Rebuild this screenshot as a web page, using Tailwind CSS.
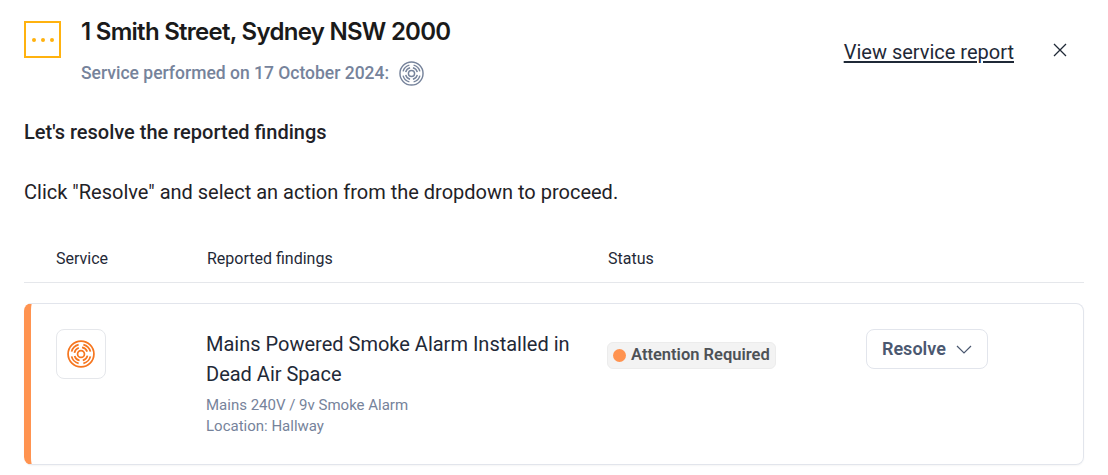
<!DOCTYPE html>
<html lang="en">

<head>
    <meta charset="UTF-8">
    <title>Service findings</title>
    <script src="https://cdn.jsdelivr.net/npm/@tailwindcss/browser@4"></script>
</head>

<body class="bg-white font-['Roboto',sans-serif] text-[#1f2227] overflow-hidden">
    <div class="w-[1108px] h-[475px] px-6 pt-[21px] overflow-hidden">
        <!-- header -->
        <div class="flex items-start">
            <div class="w-[37px] h-[37px] border-2 border-[#ffb20f] flex items-center justify-center gap-[5px]">
                <span class="w-[4px] h-[4px] rounded-full bg-[#ffb20f]"></span>
                <span class="w-[4px] h-[4px] rounded-full bg-[#ffb20f]"></span>
                <span class="w-[4px] h-[4px] rounded-full bg-[#ffb20f]"></span>
            </div>
            <div class="ml-5 flex-1">
                <h1 class="font-['Inter',sans-serif] font-semibold text-[24px] leading-[22px] tracking-[-0.72px] text-[#1a1a1a]">1 Smith Street, Sydney NSW 2000</h1>
                <div class="flex items-center mt-[17px] h-[26px]">
                    <p class="font-medium text-[17.5px] text-[#76839b]">Service performed on 17 October 2024:</p>
                    <svg class="ml-[10px]" width="25" height="25" viewBox="0 0 26 26" fill="none" stroke="#76839b" stroke-width="1.500">
                        <circle cx="13" cy="13" r="12"/>
                        <circle cx="13" cy="13" r="3.200"/>
                        <circle cx="13" cy="13" r="6.200" pathLength="100" stroke-dasharray="17 8" stroke-dashoffset="-4"/>
                        <circle cx="13" cy="13" r="9" pathLength="100" stroke-dasharray="17 8" stroke-dashoffset="-4"/>
                    </svg>
                </div>
            </div>
            <a href="#" class="mt-[18px] text-[20px] leading-[26px] underline underline-offset-2 text-[#1f2937]">View service report</a>
            <svg class="ml-[39px] mt-[22px] mr-[17px]" width="14" height="14" viewBox="0 0 14 14" fill="none" stroke="#1f2937" stroke-width="1.3">
                <path d="M1 1l12 12M13 1L1 13"/>
            </svg>
        </div>

        <p class="mt-[34px] font-medium text-[20px] leading-[24px] text-[#1f2227]">Let's resolve the reported findings</p>
        <p class="mt-[36px] text-[20px] leading-[24px] text-[#1f2227]">Click "Resolve" and select an action from the dropdown to proceed.</p>

        <!-- table head -->
        <div class="grid grid-cols-[183px_401px_258px_1fr] mt-[32px] h-[47px] items-center border-b border-[#e5e7eb] text-[16px] text-[#1f2937]">
            <span class="pl-8">Service</span>
            <span>Reported findings</span>
            <span>Status</span>
        </div>

        <!-- finding row -->
        <div class="grid grid-cols-[175px_402px_258px_1fr] mt-5 h-[162px] rounded-lg border border-[#e2e5ec] border-l-[7px] border-l-[#ff9350] shadow-[0_1px_2px_rgba(0,0,0,0.04)]">
            <div class="pl-[25px] pt-[25px]">
                <div class="w-[50px] h-[50px] rounded-lg border border-[#e5e7eb] flex items-center justify-center">
                    <svg width="28" height="28" viewBox="0 0 26 26" fill="none" stroke="#f6761f" stroke-width="1.600">
                        <circle cx="13" cy="13" r="12"/>
                        <circle cx="13" cy="13" r="3.200"/>
                        <circle cx="13" cy="13" r="6.200" pathLength="100" stroke-dasharray="17 8" stroke-dashoffset="-4"/>
                        <circle cx="13" cy="13" r="9" pathLength="100" stroke-dasharray="17 8" stroke-dashoffset="-4"/>
                    </svg>
                </div>
            </div>
            <div class="pt-[25px]">
                <p class="text-[20px] leading-[30px] text-[#1f2937]">Mains Powered Smoke Alarm Installed in Dead Air Space</p>
                <p class="mt-[6px] text-[15px] leading-[21px] text-[#76839b]">Mains 240V / 9v Smoke Alarm</p>
                <p class="text-[15px] leading-[21px] text-[#76839b]">Location: Hallway</p>
            </div>
            <div class="pt-[38px]">
                <span class="-ml-px inline-flex items-center h-[27px] px-[5px] rounded-md border border-[#ececec] bg-[#f3f3f3] font-semibold text-[16.5px] text-[#4d5156]">
                    <span class="w-[13px] h-[13px] rounded-full bg-[#ff9350] mr-[5px]"></span>Attention Required
                </span>
            </div>
            <div class="pt-[25px]">
                <button class="flex items-center h-[40px] w-[122px] pl-[15px] rounded-lg border border-[#e2e5ec] font-semibold text-[18px] text-[#4b5870]">
                    <span class="-mt-[2px]">Resolve</span>
                    <svg class="ml-[10px]" width="16" height="9" viewBox="0 0 16 9" fill="none" stroke="#4b5870" stroke-width="1.200">
                        <path d="M1 1l7 7 7-7"/>
                    </svg>
                </button>
            </div>
        </div>
    </div>
</body>

</html>
